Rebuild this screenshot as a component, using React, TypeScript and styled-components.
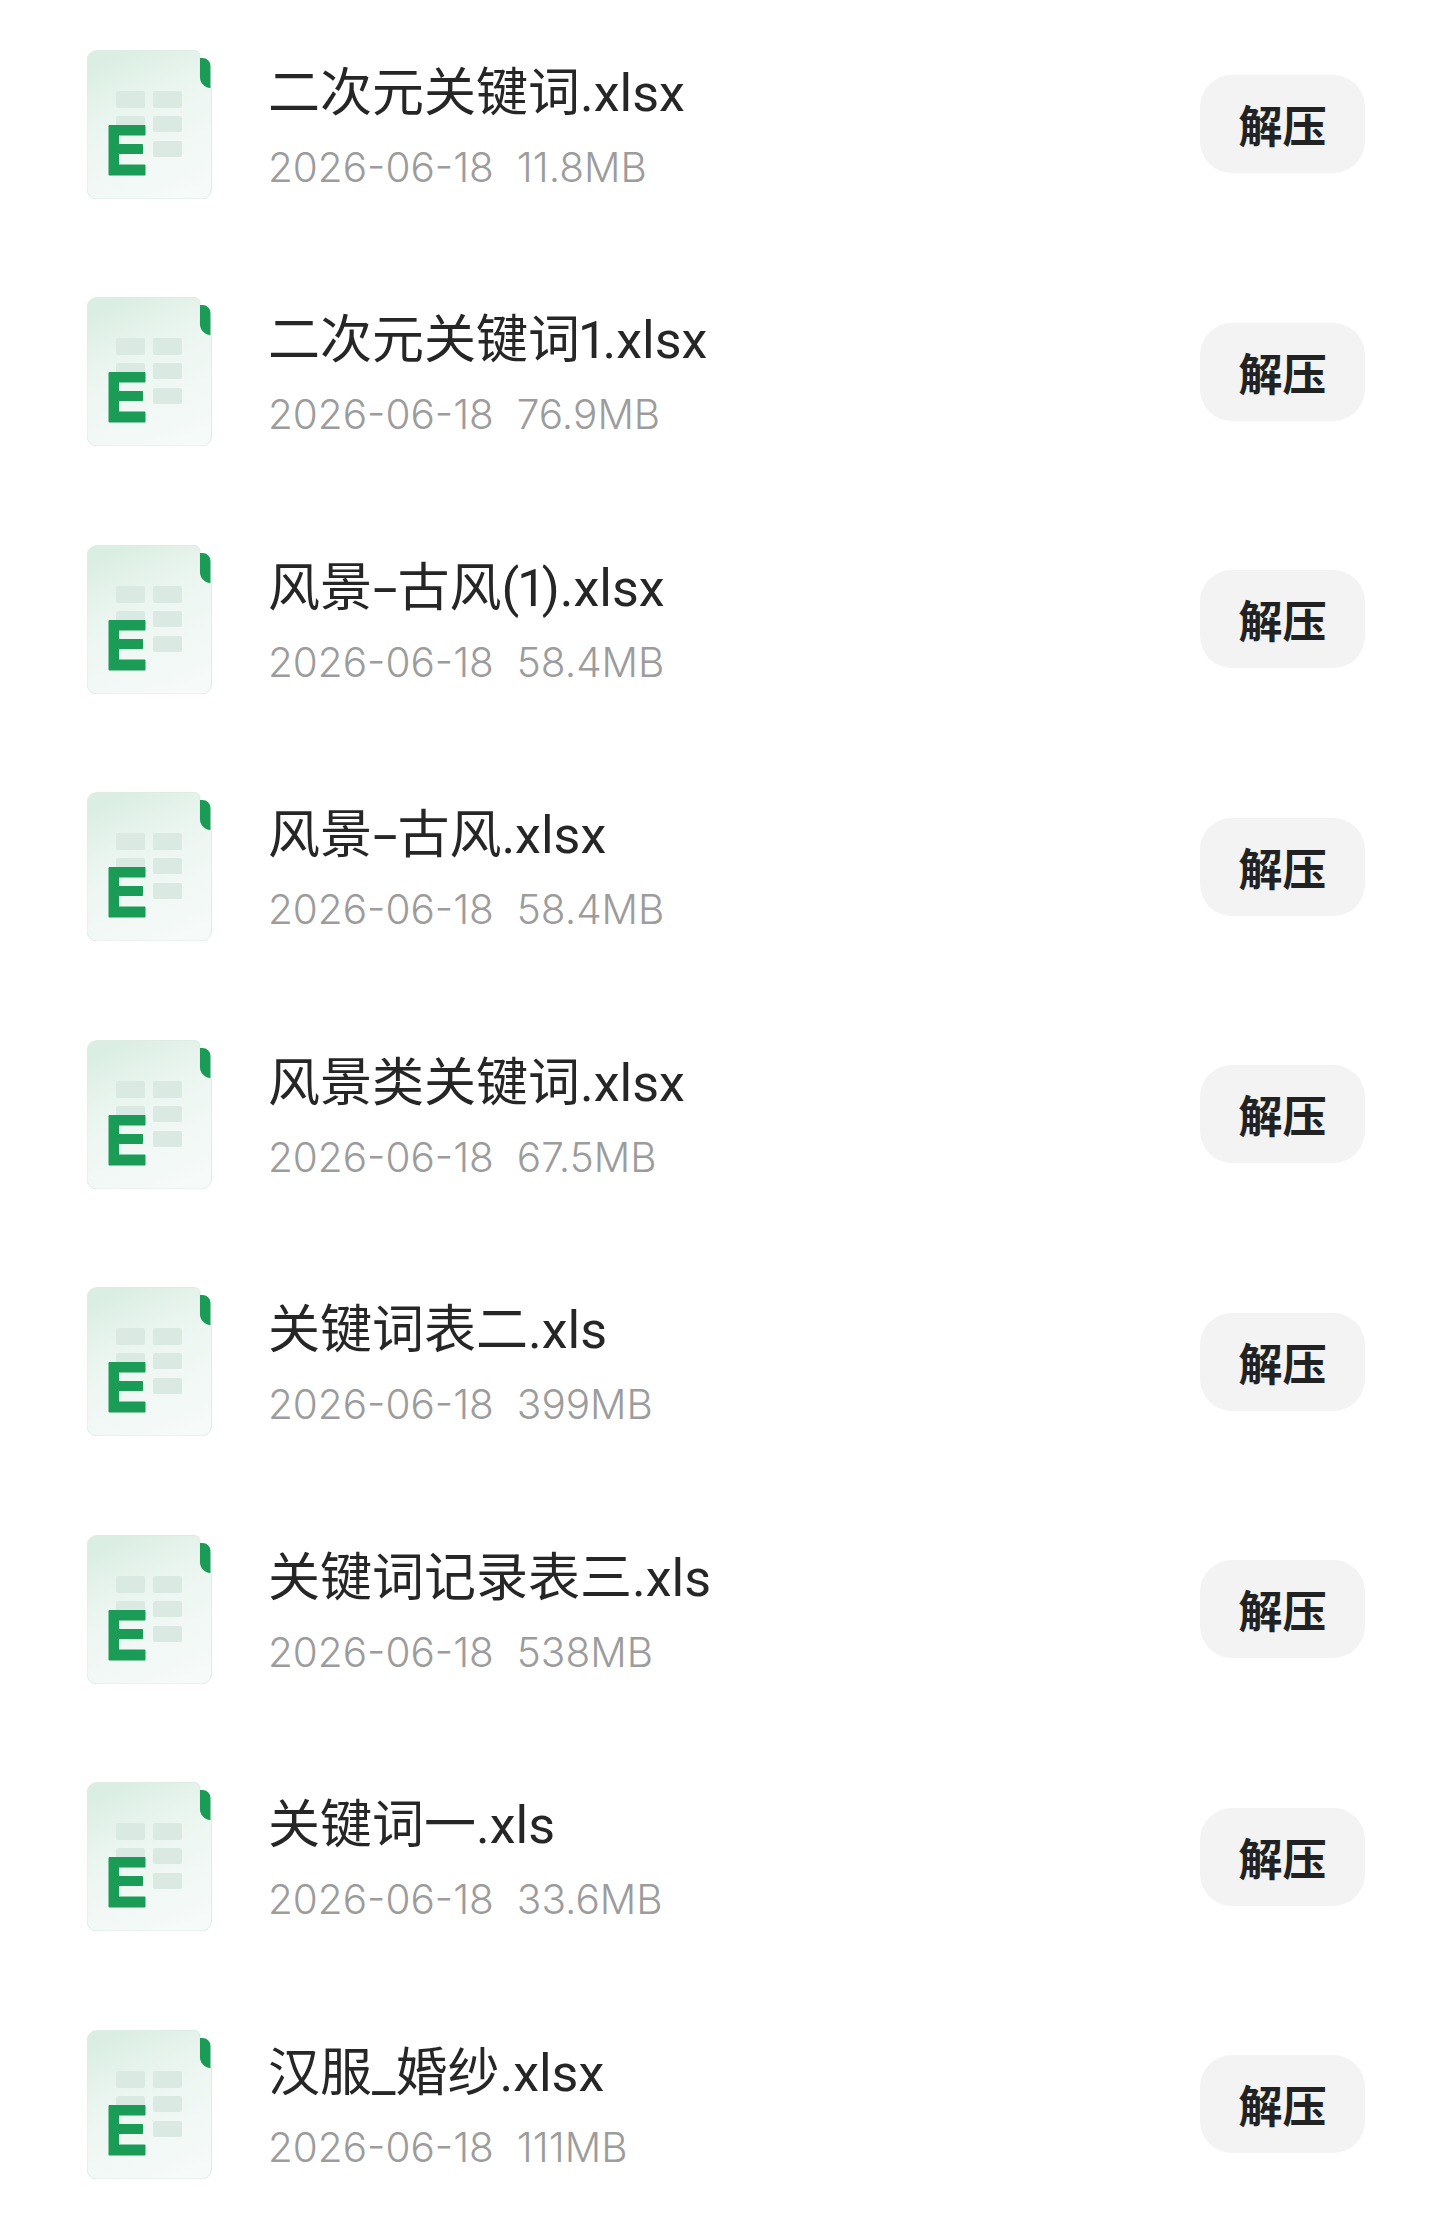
import React from 'react';
import styled, { createGlobalStyle } from 'styled-components';

const FILES = [
  { name: '二次元关键词.xlsx', size: '11.8MB' },
  { name: '二次元关键词1.xlsx', size: '76.9MB' },
  { name: '风景-古风(1).xlsx', size: '58.4MB' },
  { name: '风景-古风.xlsx', size: '58.4MB' },
  { name: '风景类关键词.xlsx', size: '67.5MB' },
  { name: '关键词表二.xls', size: '399MB' },
  { name: '关键词记录表三.xls', size: '538MB' },
  { name: '关键词一.xls', size: '33.6MB' },
  { name: '汉服_婚纱.xlsx', size: '111MB' },
];

const GlobalStyle = createGlobalStyle`
  html, body {
    margin: 0;
    padding: 0;
    background: #fff;
  }
  body {
    font-family: "Inter", "Noto Sans CJK SC", sans-serif;
  }
`;

function XlsIcon({ id }: { id: number }) {
  const bg = `bg${id}`;
  return (
    <IconSvg viewBox="0 0 125 149" aria-hidden="true">
      <defs>
        <linearGradient id={bg} x1="0.3" y1="0" x2="0.7" y2="1">
          <stop offset="0" stopColor="#dbeee3" />
          <stop offset="0.4" stopColor="#ecf6f1" />
          <stop offset="1" stopColor="#f6faf9" />
        </linearGradient>
      </defs>
      <path
        d="M10 .5H108a6 6 0 0 1 5 4V26a12 12 0 0 0 11.500 12V139a10 10 0 0 1-10 10H10a10 10 0 0 1-10-10V10A10 10 0 0 1 10 .5Z"
        fill={`url(#${bg})`}
        stroke="#dfebe5"
        strokeWidth="1"
      />
      <path d="M113 8h2.500a8 8 0 0 1 8 8v22a11 11 0 0 1-10.500-12Z" fill="#1a9c56" />
      <g fill="#dae9e1">
        <rect x="29" y="41" width="29" height="17" rx="2" />
        <rect x="66" y="41" width="29" height="17" rx="2" />
        <rect x="29" y="66" width="29" height="16" rx="2" />
        <rect x="66" y="66" width="29" height="16" rx="2" />
        <rect x="66" y="91" width="29" height="16" rx="2" />
      </g>
      <path
        d="M22 75.500H58V85H31.500V94.500H55.500V103.500H31.500V115H58V125H22Z"
        fill="#1a9c56"
        stroke="#1a9c56"
        strokeWidth="1"
        strokeLinejoin="round"
      />
    </IconSvg>
  );
}

// the hyphen in the file names is wider than the Roboto one
function FileName({ name }: { name: string }) {
  const parts = name.split('-');
  return (
    <Name>
      {parts.map((part, i) => (
        <React.Fragment key={i}>
          {i > 0 && <Dash>-</Dash>}
          {part}
        </React.Fragment>
      ))}
    </Name>
  );
}

export default function App() {
  return (
    <>
      <GlobalStyle />
      <List>
        {FILES.map((file, i) => (
          <Row key={file.name}>
            <XlsIcon id={i} />
            <Info>
              <FileName name={file.name} />
              <Meta>
                <span>2026-06-18</span>
                <span>{file.size}</span>
              </Meta>
            </Info>
            <UnzipButton type="button">解压</UnzipButton>
          </Row>
        ))}
      </List>
    </>
  );
}

const List = styled.div`
  width: 1440px;
  height: 2224px;
  padding-top: 0.5px;
  box-sizing: border-box;
  overflow: hidden;
  background: #fff;
`;

const Row = styled.div`
  height: 247.5px;
  padding: 0 75px 0 87px;
  box-sizing: border-box;
  display: flex;
  align-items: center;
`;

const IconSvg = styled.svg`
  width: 125px;
  height: 149px;
  flex: none;
`;

const Info = styled.div`
  flex: 1;
  min-width: 0;
  margin-left: 56px;
  padding-top: 1px;
  display: flex;
  flex-direction: column;
  gap: 14px;
`;

const Name = styled.div`
  font-family: "Roboto", "Noto Sans CJK SC", sans-serif;
  font-size: 52px;
  line-height: 72px;
  font-weight: 400;
  font-variant-numeric: proportional-nums;
  color: #262626;
  white-space: nowrap;
`;

const Dash = styled.span`
  display: inline-block;
  margin: 0 5.5px;
  transform: scaleX(1.7);
`;

const Meta = styled.div`
  display: flex;
  gap: 23px;
  font-size: 40.5px;
  line-height: 48px;
  font-weight: 300;
  color: #9c9c9c;
`;

const UnzipButton = styled.button`
  flex: none;
  width: 165px;
  height: 98px;
  margin: 0;
  padding: 0;
  border: none;
  border-radius: 32px;
  background: #f3f3f3;
  color: #222;
  font-family: "Noto Sans CJK SC", sans-serif;
  font-size: 44px;
  font-weight: 700;
`;
